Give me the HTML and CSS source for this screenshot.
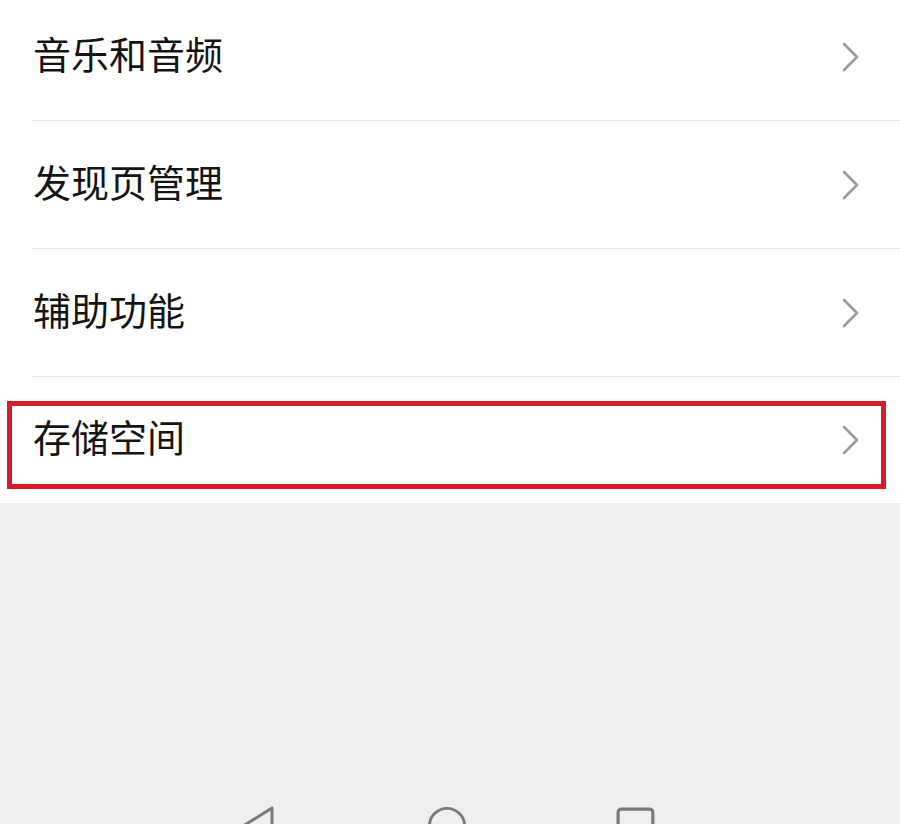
FILE: index.html
```html
<!DOCTYPE html>
<html lang="zh-CN">
<head>
<meta charset="utf-8">
<link rel="stylesheet" href="styles.css">
</head>
<body>
<div class="screen">
  <div class="list">
    <div class="row"><div class="row-inner"><span class="label">音乐和音频</span><svg class="chev" viewBox="0 0 18 30"><path d="M2 2 L15 15 L2 28"/></svg></div></div>
    <div class="row"><div class="row-inner"><span class="label">发现页管理</span><svg class="chev" viewBox="0 0 18 30"><path d="M2 2 L15 15 L2 28"/></svg></div></div>
    <div class="row"><div class="row-inner"><span class="label">辅助功能</span><svg class="chev" viewBox="0 0 18 30"><path d="M2 2 L15 15 L2 28"/></svg></div></div>
    <div class="row highlighted"><div class="row-inner last"><span class="label">存储空间</span><svg class="chev" viewBox="0 0 18 30"><path d="M2 2 L15 15 L2 28"/></svg></div><div class="mark"></div></div>
  </div>
  <div class="nav">
    <div class="slot"><svg class="nav-icon" viewBox="0 0 36 40"><path d="M32 2 L32 38 L3 20 Z"/></svg></div>
    <div class="slot"><svg class="nav-icon" viewBox="0 0 42 42"><circle cx="21" cy="21" r="18.5"/></svg></div>
    <div class="slot"><svg class="nav-icon" viewBox="0 0 38 38"><rect x="2" y="3" width="33" height="33" rx="3"/></svg></div>
  </div>
</div>
</body>
</html>
```

FILE: styles.css
```css
html, body {
  margin: 0;
  padding: 0;
}
body {
  background: #efefef;
  font-family: "Noto Sans CJK SC", "Noto Sans", sans-serif;
  overflow: hidden;
}
.screen {
  width: 900px;
  height: 824px;
  overflow: hidden;
  display: flex;
  flex-direction: column;
}
.list {
  background: #ffffff;
  margin-top: -7px;
}
.row {
  position: relative;
  padding-left: 32px;
}
.row-inner {
  height: 127px;
  display: flex;
  align-items: center;
  justify-content: space-between;
  padding-right: 40px;
  border-bottom: 1px solid #e9e9e9;
}
.row-inner.last {
  border-bottom: none;
  height: 126px;
}
.label {
  font-size: 38px;
  line-height: 46px;
  color: #141414;
  padding-left: 1px;
  padding-bottom: 8px;
}
.chev {
  width: 18px;
  height: 30px;
  fill: none;
  stroke: #9a9a9a;
  stroke-width: 2.6;
  stroke-linecap: round;
  stroke-linejoin: round;
}
.mark {
  position: absolute;
  left: 7px;
  right: 14px;
  top: 24px;
  height: 88px;
  border: 5px solid #d91c2b;
  box-sizing: border-box;
}
.nav {
  display: flex;
  justify-content: center;
  gap: 129px;
  padding-top: 303px;
  padding-right: 6px;
}
.slot {
  width: 60px;
  display: flex;
  justify-content: center;
}
.nav-icon {
  width: 40px;
  height: 40px;
  fill: none;
  stroke: #7a7a7a;
  stroke-width: 3;
  stroke-linejoin: round;
}
```
